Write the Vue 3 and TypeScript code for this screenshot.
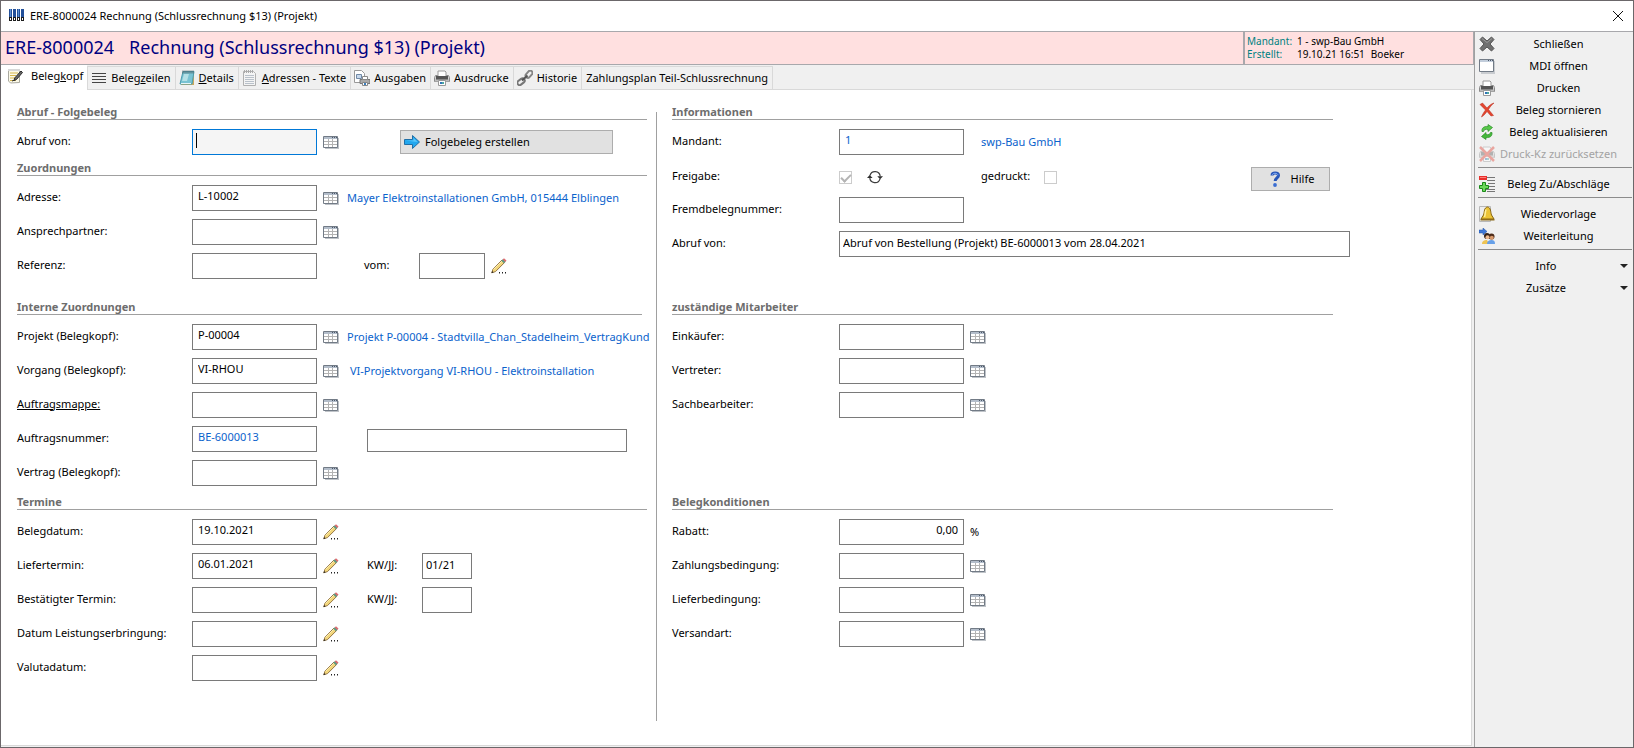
<script setup lang="ts">
import { h, ref, type FunctionalComponent } from 'vue'

type IconName =
  | 'app' | 'close' | 'edit' | 'lines' | 'notebook' | 'page' | 'output' | 'printer' | 'chain'
  | 'arrow' | 'table' | 'pencil' | 'sync' | 'help' | 'cross' | 'window' | 'cancel' | 'refresh'
  | 'noprint' | 'plusminus' | 'bell' | 'forward' | 'down'

const printer =
  '<path d="M4 1h7l1 1v5H4z" fill="#fff" stroke="#9a9a9a"/><path d="M1.500 5.500h2v2h9v-2h2l1 2v4H.5v-4z" fill="#d2d2d2" stroke="#8a8a8a"/><path d="M2 6h12v4H2z" fill="#555"/><path d="M1 9.500h14v2H1z" fill="#bdbdbd"/><path d="M4.500 10.500h7v5h-7z" fill="#fff" stroke="#999"/><path d="M6 12h2v2H6z" fill="#2f72b8"/><path d="M8 12h2v2H8z" fill="#4ba7a2"/>'

const icons: Record<IconName, string> = {
  app: '<path d="M0 1h3v8H0zM4 1h3v8H4zM8 1h3v8H8zM12 1h3v8h-3z" fill="#23509a"/><path d="M1 1h1v8H1zM9 1h1v8H9z" fill="#5b8fd0"/><path d="M0 9h3v4H0zM4 9h3v4H4zM8 9h3v4H8zM12 9h3v4h-3z" fill="#1c1c1c"/><path d="M1 10h1v2H1zM5 10h1v2H5zM9 10h1v2H9zM13 10h1v2h-1z" fill="#fff"/>',
  close: '<path d="M3 3l10 10M13 3L3 13" stroke="#111" fill="none"/>',
  edit: '<path d="M1.500 1.500h11v13l-9 .5-2-2z" fill="#fbf9e8" stroke="#aaa9a0"/><path d="M1 1h12v2H1z" fill="#d8d8d8"/><path d="M3 5h8M3 7.500h6M3 10h5M3 12.500h6" stroke="#d5b54d"/><path d="M14 3l1.500 1.500-6 7-2.500 1 .7-2.500z" fill="#666" stroke="#2b2b2b"/><path d="M5 13l3-1" stroke="#333"/>',
  lines: '<path d="M1 3.500h14M1 6.500h14M1 9.500h14M1 12.500h14" stroke="#454545"/>',
  notebook: '<path d="M4 3h11v12H2z" fill="#caa85c"/><path d="M4 1.500h11L13 14H1z" fill="#79c3d3" stroke="#4b9db0"/><path d="M5 4h5L8 11H3z" fill="#b4e0e6"/><path d="M4 .5v3M6 .5v3M8 .5v3M10 .5v3M12 .5v3M14 .5v3" stroke="#50646a"/><path d="M2 13h10v1H2z" fill="#e8f6f8"/>',
  page: '<path d="M1.500 1.500h10l2 2v12h-12z" fill="#f4f4f4" stroke="#b0b0b0"/><path d="M3 5.500h9M3 7.500h9M3 9.500h9M3 11.500h9M3 13.500h9" stroke="#b9c1ca"/><path d="M2.500 0v3M4.500 0v3M6.500 0v3M8.500 0v3M10.500 0v3" stroke="#aaa"/>',
  output: '<path d="M.5.500h7l3 3v9H.5z" fill="#fff" stroke="#999"/><path d="M2.500 4.500h5v4h-5z" fill="#c7d8ec" stroke="#7089a5"/><path d="M6 9.500h10v4H6z" fill="#aaa" stroke="#777"/><path d="M8.500 6.500h5v3h-5zM8.500 12.500h5v3h-5z" fill="#fff" stroke="#888"/><path d="M10 13h2v2h-2z" fill="#3c7fbd"/>',
  printer,
  chain: '<g fill="none" stroke-width="2"><rect x="8" y="2" width="8" height="4.500" rx="2.200" transform="rotate(-48 12 4.200)" stroke="#858585"/><rect x="0" y="9.500" width="8" height="4.500" rx="2.200" transform="rotate(-38 4 11.700)" stroke="#777"/><path d="M5 10.500L10.500 5.500" stroke="#555"/></g>',
  arrow: '<path d="M.5 5.500h8v-4l7 6.500-7 6.500v-4h-8z" fill="#22a7ee" stroke="#206fa7"/><path d="M1.500 6.500h8v-2.500l4 4z" fill="#5bc8fb"/>',
  table: '<path d="M2 4h14v11H2z" fill="#bfc3c8"/><path d="M.5 2.500h14v11H.5z" fill="#fff" stroke="#727b86"/><path d="M1 3h13v2H1z" fill="#b3bdca"/><path d="M9 3h1v1H9zM11 3h1v1h-1zM13 3h1v1h-1z" fill="#4d5a6c"/><path d="M1 7.500h13M1 10.500h13M5.500 5v8M9.500 5v8" stroke="#b3b3b3"/>',
  pencil: '<path d="M.7 14.800l1.300-3.600L11 2l2.600 2.500L4.500 13.600z" fill="#f2d67b" stroke="#8b6a36" stroke-width=".9"/><path d="M2.500 11.500L11.500 2.500" stroke="#fff0b0"/><path d="M10.300 2.700L12 1l2.600 2.500-1.700 1.700z" fill="#5d9984"/><path d="M11.700 1.400L13 .3l2.500 2.300-1.200 1.300z" fill="#dd6b70"/><path d="M.5 15l.7-2 1.300 1.400z" fill="#222"/><path d="M8 14h1v1.500H8zM11 14h1v1.500h-1zM14 14h1v1.500h-1z" fill="#222"/>',
  sync: '<path d="M3 6.500a5.200 5.200 0 0 1 10.200.8M13 9.800A5.200 5.200 0 0 1 2.800 8.500" fill="none" stroke="#3c3c3c" stroke-width="1.200"/><path d="M10.300 7.200h5.700l-2.900 3zM0 9l2.700-3L5.600 9z" fill="#2e2e2e"/>',
  help: '<path d="M5 4.500C5 2.600 6.400 2 8.200 2c2 0 3.300.8 3.300 2.500 0 2.200-3.300 2.700-3.300 5.500" fill="none" stroke="#2756b8" stroke-width="3"/><path d="M5.200 3.800C5.800 2.600 6.800 2.300 8 2.300c1.800 0 2.900.6 2.900 2" fill="none" stroke="#86aef5"/><circle cx="8" cy="14" r="1.900" fill="#3a6dd2"/>',
  cross: '<path d="M3.500 1L8 5l4.500-4L15 3.500 11 8l4 4.500-2.500 2.500L8 11l-4.500 4L1 12.500 5 8 1 3.500z" fill="#707070" stroke="#555"/><path d="M3 2.500l5 4 5-4" fill="none" stroke="#999"/>',
  window: '<path d="M2 3h14v13H2z" fill="#c9ccd0"/><path d="M.5 1.500h14v12H.5z" fill="#fff" stroke="#727b86"/><path d="M1 2h13v2H1z" fill="#c2cddb"/><path d="M9 2h1v1H9zM11 2h1v1h-1zM13 2h1v1h-1z" fill="#4d5a6c"/>',
  cancel: '<path d="M1 2.500l2.500-1.500L8 6c2-2.500 4-4 7-5-2.500 2-4 4-5.500 6.500l5 6-2.500.5-4-4.500c-1.500 2-3 4-5.500 5.500 1-3 2.500-5 4-7z" fill="#e3452f" stroke="#b72a1a" stroke-width=".5"/>',
  refresh: '<path d="M3 7.500C2.500 4 5 2 9 2.500V.5l4.500 3-4.500 4v-2C6.500 5 5 5.500 4.500 7.500z" fill="#57c84a" stroke="#2b8e27" stroke-width=".7"/><path d="M13 8.500c.5 3.500-2 5.500-6 5v2l-4.500-3 4.500-4v2c2.500.5 4 0 4.500-2z" fill="#44b83a" stroke="#2b8e27" stroke-width=".7"/>',
  noprint: `<g opacity=".4">${printer}<path d="M1 1l14 14M15 1L1 15" stroke="#e03a2a" stroke-width="2.500"/></g>`,
  plusminus: '<path d="M5 1.500h11M8 4.500h8M9 7.500h7M9 10.500h7M6 13.500h10M8 15.500h8" stroke="#777"/><path d="M0 0h8v4H0z" fill="#e8302c"/><path d="M1 1h6v1H1z" fill="#ff8078"/><path d="M3.500 6.500h3v3h3v3h-3v3h-3v-3h-3v-3h3z" fill="#6bd85a" stroke="#198a18"/>',
  bell: '<path d="M.5.500h11v15H.5z" fill="#eee" stroke="#b8b8b8"/><path d="M8.500 1C5 1.500 5.500 6 4.500 9L2 13h13l-2.500-4C11.500 6 12 1.500 8.500 1z" fill="#ecc437" stroke="#866413"/><path d="M7 3.500C6 6 6.500 8 5.500 11" fill="none" stroke="#fff1a0" stroke-width="1.500"/><path d="M1.500 13h14v1.500h-14z" fill="#8f6c1c"/>',
  forward: '<path d="M0 2h4V0l4 3.500L4 7V5H0z" fill="#3e78d8" stroke="#2352a0" stroke-width=".5"/><circle cx="8" cy="8" r="3" fill="#332017"/><circle cx="12.500" cy="8.500" r="3" fill="#4d2c1a"/><circle cx="8.500" cy="9.300" r="2" fill="#efb98c"/><circle cx="12.800" cy="9.800" r="2" fill="#d99a6c"/><path d="M3 16c0-3 2-4 5-4l2 4z" fill="#eec453"/><path d="M8 16c0-3 2-4 4.500-4S16 13 16 16z" fill="#67a0e8"/>',
  down: '<path d="M4 6h8l-4 4z" fill="#222"/>',
}

const Icon: FunctionalComponent<{ name: IconName }> = (props) =>
  h('svg', { viewBox: '0 0 16 16', width: 16, height: 16, 'aria-hidden': 'true', innerHTML: icons[props.name] })
Icon.props = ['name']

interface Tab { id: string; icon?: IconName; pre: string; key?: string; post?: string }
const tabs: Tab[] = [
  { id: 'kopf', icon: 'edit', pre: 'Beleg', key: 'k', post: 'opf' },
  { id: 'zeilen', icon: 'lines', pre: 'Beleg', key: 'z', post: 'eilen' },
  { id: 'details', icon: 'notebook', pre: '', key: 'D', post: 'etails' },
  { id: 'adressen', icon: 'page', pre: '', key: 'A', post: 'dressen - Texte' },
  { id: 'ausgaben', icon: 'output', pre: 'Ausgaben' },
  { id: 'ausdrucke', icon: 'printer', pre: 'Ausdrucke' },
  { id: 'historie', icon: 'chain', pre: 'Historie' },
  { id: 'zahlungsplan', pre: 'Zahlungsplan Teil-Schlussrechnung' },
]
const activeTab = ref('kopf')

interface Extra { label?: string; id: string; value: string; kind: 'kw' | 'date' | 'wide' }
interface Field {
  id: string; label: string; value: string
  icon?: 'table' | 'pencil'; blue?: boolean; linked?: boolean
  link?: string; inset?: boolean; extra?: Extra
}
interface Section { title: string; short?: boolean; fields: Field[] }

const assignments: Section = {
  title: 'Zuordnungen',
  fields: [
    { id: 'adresse', label: 'Adresse:', value: 'L-10002', icon: 'table', link: 'Mayer Elektroinstallationen GmbH, 015444 Elblingen' },
    { id: 'ansprech', label: 'Ansprechpartner:', value: '', icon: 'table' },
    { id: 'referenz', label: 'Referenz:', value: '', extra: { id: 'vom', label: 'vom:', value: '', kind: 'date' } },
  ],
}
const lowerLeft: Section[] = [
  {
    title: 'Interne Zuordnungen', short: true,
    fields: [
      { id: 'projekt', label: 'Projekt (Belegkopf):', value: 'P-00004', icon: 'table', link: 'Projekt P-00004 - Stadtvilla_Chan_Stadelheim_VertragKund' },
      { id: 'vorgang', label: 'Vorgang (Belegkopf):', value: 'VI-RHOU', icon: 'table', link: 'VI-Projektvorgang VI-RHOU - Elektroinstallation', inset: true },
      { id: 'mappe', label: 'Auftragsmappe:', value: '', icon: 'table', linked: true },
      { id: 'auftrag', label: 'Auftragsnummer:', value: 'BE-6000013', blue: true, extra: { id: 'auftragstext', value: '', kind: 'wide' } },
      { id: 'vertrag', label: 'Vertrag (Belegkopf):', value: '', icon: 'table' },
    ],
  },
  {
    title: 'Termine',
    fields: [
      { id: 'belegdatum', label: 'Belegdatum:', value: '19.10.2021', icon: 'pencil' },
      { id: 'liefertermin', label: 'Liefertermin:', value: '06.01.2021', icon: 'pencil', extra: { id: 'kw1', label: 'KW/JJ:', value: '01/21', kind: 'kw' } },
      { id: 'bestaetigt', label: 'Bestätigter Termin:', value: '', icon: 'pencil', extra: { id: 'kw2', label: 'KW/JJ:', value: '', kind: 'kw' } },
      { id: 'leistung', label: 'Datum Leistungserbringung:', value: '', icon: 'pencil' },
      { id: 'valuta', label: 'Valutadatum:', value: '', icon: 'pencil' },
    ],
  },
]
const staff = [
  { id: 'einkaeufer', label: 'Einkäufer:' },
  { id: 'vertreter', label: 'Vertreter:' },
  { id: 'sachbearbeiter', label: 'Sachbearbeiter:' },
]
const conditions = [
  { id: 'zahlung', label: 'Zahlungsbedingung:' },
  { id: 'lieferung', label: 'Lieferbedingung:' },
  { id: 'versand', label: 'Versandart:' },
]

interface Action { label: string; icon?: IconName; disabled?: boolean; menu?: boolean }
const actionGroups: Action[][] = [
  [
    { label: 'Schließen', icon: 'cross' },
    { label: 'MDI öffnen', icon: 'window' },
    { label: 'Drucken', icon: 'printer' },
    { label: 'Beleg stornieren', icon: 'cancel' },
    { label: 'Beleg aktualisieren', icon: 'refresh' },
    { label: 'Druck-Kz zurücksetzen', icon: 'noprint', disabled: true },
  ],
  [{ label: 'Beleg Zu/Abschläge', icon: 'plusminus' }],
  [
    { label: 'Wiedervorlage', icon: 'bell' },
    { label: 'Weiterleitung', icon: 'forward' },
  ],
  [
    { label: 'Info', menu: true },
    { label: 'Zusätze', menu: true },
  ],
]
</script>

<template>
  <div class="window">
    <header class="titlebar">
      <Icon name="app" />
      <span class="caption">ERE-8000024 Rechnung (Schlussrechnung $13) (Projekt)</span>
      <button class="bare close" type="button" aria-label="Fenster schließen"><Icon name="close" /></button>
    </header>

    <div class="body">
      <main class="main">
        <div class="banner">
          <h1 class="doc-title"><span>ERE-8000024</span><span>Rechnung (Schlussrechnung $13) (Projekt)</span></h1>
          <dl class="meta">
            <dt>Mandant:</dt><dd>1 - swp-Bau GmbH</dd>
            <dt>Erstellt:</dt><dd><span>19.10.21 16:51</span><span>Boeker</span></dd>
          </dl>
        </div>

        <div class="tabs" role="tablist">
          <button
            v-for="tab in tabs" :key="tab.id" type="button" role="tab" class="tab"
            :class="{ active: tab.id === activeTab }" :aria-selected="tab.id === activeTab"
            @click="activeTab = tab.id"
          >
            <Icon v-if="tab.icon" :name="tab.icon" />
            <span>{{ tab.pre }}<u v-if="tab.key">{{ tab.key }}</u>{{ tab.post }}</span>
          </button>
        </div>

        <form class="panel" @submit.prevent>
          <div class="column left">
            <div class="block">
              <section class="section">
                <h2>Abruf - Folgebeleg</h2>
                <div class="row">
                  <label for="abruf">Abruf von:</label>
                  <span class="focus-wrap"><input id="abruf" class="field focused" type="text" /><i class="caret"></i></span>
                  <button class="bare look" type="button" aria-label="Abruf auswählen"><Icon name="table" /></button>
                  <div class="aux">
                    <button class="push follow" type="button"><Icon name="arrow" />Folgebeleg erstellen</button>
                  </div>
                </div>
              </section>
              <section class="section second">
                <h2>{{ assignments.title }}</h2>
                <div v-for="f in assignments.fields" :key="f.id" class="row">
                  <label :for="f.id">{{ f.label }}</label>
                  <input :id="f.id" class="field" type="text" :value="f.value" />
                  <button v-if="f.icon" class="bare look" type="button" :aria-label="f.label + ' auswählen'"><Icon :name="f.icon" /></button>
                  <a v-if="f.link" class="ref" href="#">{{ f.link }}</a>
                  <div v-if="f.extra" class="aux date">
                    <label :for="f.extra.id">{{ f.extra.label }}</label>
                    <input :id="f.extra.id" class="field" type="text" :value="f.extra.value" />
                    <button class="bare look" type="button" aria-label="Datum wählen"><Icon name="pencil" /></button>
                  </div>
                </div>
              </section>
            </div>

            <section v-for="s in lowerLeft" :key="s.title" class="section block">
              <h2 :class="{ short: s.short }">{{ s.title }}</h2>
              <div v-for="f in s.fields" :key="f.id" class="row">
                <label :for="f.id"><a v-if="f.linked" class="plain" href="#">{{ f.label }}</a><template v-else>{{ f.label }}</template></label>
                <input :id="f.id" class="field" :class="{ blue: f.blue }" type="text" :value="f.value" />
                <button v-if="f.icon" class="bare look" type="button" :aria-label="f.label + ' auswählen'"><Icon :name="f.icon" /></button>
                <a v-if="f.link" class="ref" :class="{ inset: f.inset }" href="#">{{ f.link }}</a>
                <div v-if="f.extra" class="aux" :class="f.extra.kind">
                  <label v-if="f.extra.label" :for="f.extra.id">{{ f.extra.label }}</label>
                  <input :id="f.extra.id" class="field tight" type="text" :value="f.extra.value" :aria-label="f.extra.label ?? 'Auftragstext'" />
                </div>
              </div>
            </section>
          </div>

          <div class="column right">
            <section class="section block">
              <h2>Informationen</h2>
              <div class="row">
                <label for="mandant">Mandant:</label>
                <input id="mandant" class="field blue" type="text" value="1" />
                <a class="ref beside" href="#">swp-Bau GmbH</a>
              </div>
              <div class="row">
                <label for="freigabe">Freigabe:</label>
                <span class="release">
                  <input id="freigabe" class="check" type="checkbox" checked disabled />
                  <button class="bare" type="button" aria-label="Freigabe wechseln"><Icon name="sync" /></button>
                </span>
                <div class="beside printed">
                  <label for="gedruckt">gedruckt:</label>
                  <input id="gedruckt" class="check" type="checkbox" disabled />
                  <button class="push help" type="button"><Icon name="help" />Hilfe</button>
                </div>
              </div>
              <div class="row">
                <label for="fremd">Fremdbelegnummer:</label>
                <input id="fremd" class="field" type="text" />
              </div>
              <div class="row">
                <label for="abrufvon">Abruf von:</label>
                <input id="abrufvon" class="field tight long" type="text" value="Abruf von Bestellung (Projekt) BE-6000013 vom 28.04.2021" />
              </div>
            </section>

            <section class="section block">
              <h2>zuständige Mitarbeiter</h2>
              <div v-for="f in staff" :key="f.id" class="row">
                <label :for="f.id">{{ f.label }}</label>
                <input :id="f.id" class="field" type="text" />
                <button class="bare look" type="button" :aria-label="f.label + ' auswählen'"><Icon name="table" /></button>
              </div>
            </section>

            <section class="section block">
              <h2>Belegkonditionen</h2>
              <div class="row">
                <label for="rabatt">Rabatt:</label>
                <input id="rabatt" class="field number" type="text" value="0,00" />
                <span class="unit">%</span>
              </div>
              <div v-for="f in conditions" :key="f.id" class="row">
                <label :for="f.id">{{ f.label }}</label>
                <input :id="f.id" class="field" type="text" />
                <button class="bare look" type="button" :aria-label="f.label + ' auswählen'"><Icon name="table" /></button>
              </div>
            </section>
          </div>
        </form>
      </main>

      <nav class="actions" aria-label="Aktionen">
        <div v-for="(group, i) in actionGroups" :key="i" class="group">
          <button
            v-for="a in group" :key="a.label" type="button" class="bare action"
            :class="{ menu: a.menu }" :disabled="a.disabled"
          >
            <Icon v-if="a.icon" :name="a.icon" />
            <span>{{ a.label }}</span>
            <Icon v-if="a.menu" name="down" />
          </button>
        </div>
      </nav>
    </div>
  </div>
</template>

<style>
body {
  margin: 0;
  background: #f0f0f0;
}
</style>

<style scoped>
.window,
.window * {
  box-sizing: border-box;
}
.window {
  display: flex;
  flex-direction: column;
  min-height: 100vh;
  border: 1px solid #6b676a;
  background: #f0f0f0;
  color: #000;
  font: 11px/16px "Noto Sans", "Open Sans", sans-serif;
}
svg {
  display: block;
  flex: none;
}
button,
input {
  font: inherit;
  color: inherit;
}
.bare {
  display: flex;
  padding: 0;
  border: 0;
  background: none;
}
.titlebar {
  display: flex;
  align-items: center;
  gap: 5px;
  height: 30px;
  padding: 0 7px 1px 8px;
  background: #fff;
}
.close {
  margin-left: auto;
}
.body {
  display: flex;
  flex: 1;
}
.main {
  display: flex;
  flex: 1;
  flex-direction: column;
  min-width: 0;
}
.banner {
  display: flex;
  height: 34px;
  border: 1px solid #a8a8ac;
  border-left: 0;
  background: #ffe0e0;
}
.doc-title {
  display: flex;
  flex: 1;
  gap: 15px;
  margin: 0;
  padding-left: 4px;
  color: #000080;
  font-size: 18px;
  font-weight: 400;
  line-height: 30px;
  white-space: nowrap;
}
.meta {
  display: grid;
  grid-template-columns: 50px 1fr;
  align-content: center;
  width: 230px;
  margin: 0;
  padding-left: 2px;
  border-left: 2px solid #a8a8ac;
  font-size: 10px;
  line-height: 13px;
}
.meta dt {
  color: #008080;
}
.meta dd {
  display: flex;
  gap: 6px;
  margin: 0;
}
.tabs {
  display: flex;
  align-items: flex-end;
  height: 25px;
  border-bottom: 1px solid #d9d9d9;
}
.tab {
  display: flex;
  align-items: center;
  gap: 4px;
  height: 23px;
  padding: 0 4px 0 3px;
  border: 1px solid #d9d9d9;
  border-width: 1px 0 0 1px;
  background: #f0f0f0;
  white-space: nowrap;
}
.tab:last-child {
  padding-left: 4px;
  border-right-width: 1px;
}
.tab.active {
  gap: 8px;
  height: 25px;
  padding: 0 4px 4px 5px;
  margin-bottom: -1px;
  border-color: #fff;
  background: #fff;
}
.panel {
  display: flex;
  flex: 1;
  padding: 14px 0 0 16px;
  margin: 0 2px 1px 0;
  border: 1px solid #d9d9d9;
  border-width: 0 1px 1px 0;
  background: #fff;
}
.column {
  display: grid;
  grid-template-rows: 195px 195px auto;
  align-content: start;
  min-width: 0;
}
.left {
  flex: 0 1 634px;
}
.right {
  position: relative;
  flex: 1;
  padding: 0 138px 0 16px;
  margin: 0 0 24px 5px;
}
.right::before {
  position: absolute;
  top: 8px;
  bottom: 0;
  left: 0;
  width: 1px;
  background: #a0a0a0;
  content: "";
}
.section {
  display: flex;
  flex-direction: column;
  gap: 8px;
}
.block {
  min-width: 0;
}
.second {
  margin-top: 5px;
}
h2 {
  height: 16px;
  margin: 0 4px 1px 0;
  border-bottom: 1px solid #a0a0a0;
  color: #6d6d6d;
  font-size: 11px;
  font-weight: 700;
  line-height: 15px;
}
h2.short {
  margin-right: 9px;
}
.right h2 {
  margin-right: 0;
}
.row {
  display: grid;
  grid-template-columns: 175px 125px 30px minmax(0, 1fr);
  align-items: center;
  height: 26px;
}
.right .row {
  grid-template-columns: 167px 125px 30px minmax(0, 1fr);
}
.row label {
  padding-bottom: 3px;
}
.plain {
  color: #000;
}
.field {
  width: 100%;
  height: 26px;
  padding: 0 5px 6px;
  border: 1px solid #7a7a7a;
  border-radius: 0;
  outline: 0;
  background: #fff;
}
.field.tight {
  padding: 0 3px 4px;
}
.field.blue {
  color: #0a62cc;
}
.field.number {
  text-align: right;
}
.field.long {
  width: 511px;
}
.focus-wrap {
  position: relative;
  display: flex;
}
.field.focused {
  border-color: #0078d7;
  background: #f5f5f5;
}
.caret {
  position: absolute;
  top: 4px;
  left: 4px;
  width: 1px;
  height: 15px;
  background: #000;
}
.look {
  padding-left: 6px;
}
.ref {
  overflow: hidden;
  grid-column: 4;
  color: #0a62cc;
  text-decoration: none;
  white-space: nowrap;
}
.ref.inset {
  padding-left: 3px;
}
.beside,
.ref.beside {
  grid-column: 3 / 5;
  padding-left: 17px;
}
.aux {
  display: flex;
  grid-column: 4;
  align-items: center;
  padding-left: 20px;
}
.aux label {
  flex: none;
  width: 55px;
}
.aux.date {
  padding-left: 17px;
}
.aux.date .field {
  width: 66px;
}
.aux.kw .field {
  width: 50px;
}
.aux.wide {
  align-self: end;
}
.aux.wide .field {
  width: 260px;
  height: 23px;
}
.push {
  display: flex;
  align-items: center;
  height: 24px;
  border: 1px solid #adadad;
  border-radius: 0;
  background: #e1e1e1;
}
.follow {
  gap: 5px;
  width: 213px;
  padding: 0 3px;
  margin-left: 33px;
}
.release {
  display: flex;
  align-items: center;
  gap: 15px;
}
.printed {
  display: flex;
  align-items: center;
}
.printed label {
  width: 63px;
}
.check {
  width: 13px;
  height: 13px;
  margin: 0;
  border: 1px solid #ccc;
  background: #fff;
  appearance: none;
}
.check:checked::before {
  display: block;
  width: 8px;
  height: 4px;
  margin: 2px 1px;
  border: solid #b4b4b4;
  border-width: 0 0 2px 2px;
  transform: rotate(-45deg);
  content: "";
}
.help {
  justify-content: center;
  gap: 8px;
  width: 79px;
  margin: 4px 3px 0 auto;
}
.unit {
  padding-left: 6px;
}
.actions {
  width: 159px;
  padding: 1px 1px 0 3px;
  border-top: 1px solid #a8a8ac;
  border-left: 1px solid #a0a0a0;
}
.group + .group {
  margin-top: 2px;
  padding-top: 5px;
  border-top: 1px solid #8c8c8c;
}
.action {
  align-items: center;
  width: 100%;
  height: 22px;
  padding-left: 1px;
}
.action span {
  flex: 1;
  padding-right: 10px;
  text-align: center;
}
.action.menu {
  padding-left: 0;
}
.action.menu span {
  padding-right: 2px;
}
.action:disabled {
  color: #a3a3a3;
}
</style>
